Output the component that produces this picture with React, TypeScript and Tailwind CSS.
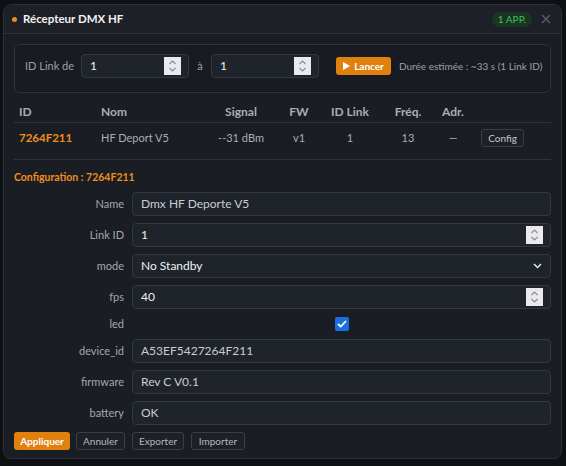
import React from "react";

function Spinner() {
  return (
    <span className="absolute right-[7px] top-1/2 -translate-y-1/2 w-[17px] h-[18px] bg-[#e9e9ee] flex flex-col items-center justify-center">
      <svg width="9" height="14" viewBox="0 0 9 14" fill="none" stroke="#8a8a90" strokeWidth="1.1">
        <path d="M1.5 5 L4.5 2 L7.5 5" />
        <path d="M1.5 9 L4.5 12 L7.5 9" />
      </svg>
    </span>
  );
}

function NumInput({ value, className }: { value: string; className: string }) {
  return (
    <div className={"relative h-[24px] rounded-[4px] border border-[#33373e] bg-[#1f232a] flex items-center pl-[8px] text-[12px] text-[#eef0f3] shrink-0 " + className}>
      {value}
      <Spinner />
    </div>
  );
}

function Field({ label, children, h = "h-[24px]" }: { label: string; children: React.ReactNode; h?: string }) {
  return (
    <div className={"flex items-center gap-[8px] " + h}>
      <div className="w-[110px] text-right text-[11px] leading-[14px] text-[#a3a8b0] shrink-0">{label}</div>
      <div className="flex-1 h-full">{children}</div>
    </div>
  );
}

function TextBox({ value }: { value: string }) {
  return (
    <div className="h-full rounded-[4px] border border-[#33373e] bg-[#1f232a] flex items-center pl-[8px] text-[12px] text-[#c9cdd3]">
      {value}
    </div>
  );
}

export default function App() {
  return (
    <div className="w-[566px] h-[466px] bg-[#0e1014] pt-[4px] pl-[3px] font-['Lato',sans-serif] overflow-hidden leading-[14px]">
      <div className="w-[559px] h-[455px] rounded-[8px] border border-[#2b2f36] bg-[#1a1d23] flex flex-col overflow-hidden">
        {/* header */}
        <div className="h-[29px] shrink-0 flex items-center pl-[8px] pr-[10px] bg-[#1d2026] border-b border-[#2d3138]">
          <span className="w-[5px] h-[5px] rounded-full bg-[#ef8a1a] mr-[6px]" />
          <span className="text-[11.5px] font-bold text-[#f1f2f4]">Récepteur DMX HF</span>
          <span className="ml-auto rounded-full bg-[#1b3523] text-[#3fc05c] text-[10px] px-[6px] h-[15px] flex items-center">1 APP.</span>
          <svg className="ml-[9px]" width="10" height="10" viewBox="0 0 10 10" stroke="#5b6068" strokeWidth="1.3">
            <path d="M1 1 L9 9 M9 1 L1 9" />
          </svg>
        </div>

        <div className="flex flex-col px-[10px] pt-[10px]">
          {/* range box */}
          <div className="h-[49px] rounded-[6px] border border-[#2f333a] bg-[#181b21] flex items-center pl-[10px] pr-[10px] pb-[6px]">
            <span className="w-[56px] shrink-0 whitespace-nowrap text-[11px] text-[#9ba0a8]">ID Link de</span>
            <NumInput value="1" className="w-[108px]" />
            <span className="w-[22px] shrink-0 text-center text-[11px] text-[#9ba0a8]">à</span>
            <NumInput value="1" className="w-[108px]" />
            <button className="ml-[17px] shrink-0 h-[18px] w-[55px] rounded-[3px] bg-[#e0800f] text-white text-[10px] font-bold flex items-center justify-center gap-[4px]">
              <svg width="7" height="8" viewBox="0 0 7 8"><path d="M0 0 L7 4 L0 8 Z" fill="#fff" /></svg>
              Lancer
            </button>
            <span className="ml-[8px] text-[10px] text-[#9ba0a8] whitespace-nowrap">Durée estimée : ~33 s (1 Link ID)</span>
          </div>

          {/* table */}
          <div className="mt-[9px] flex items-center h-[21px] border-b border-[#2e3239] text-[12px] font-bold text-[#a9aeb6]">
            <div className="w-[82px] pl-[5px]">ID</div>
            <div className="w-[100px] pl-[5px]">Nom</div>
            <div className="w-[90px] text-center">Signal</div>
            <div className="w-[26px] text-center">FW</div>
            <div className="w-[76px] text-center">ID Link</div>
            <div className="w-[40px] text-center">Fréq.</div>
            <div className="w-[50px] text-center">Adr.</div>
            <div className="flex-1" />
          </div>
          <div className="flex items-center h-[29px] text-[11px] text-[#a9aeb5]">
            <div className="w-[82px] pl-[5px] text-[11.5px] font-bold text-[#ee8e1c]">7264F211</div>
            <div className="w-[100px] pl-[5px]">HF Deport V5</div>
            <div className="w-[90px] text-center">--31 dBm</div>
            <div className="w-[26px] text-center">v1</div>
            <div className="w-[76px] text-center">1</div>
            <div className="w-[40px] text-center">13</div>
            <div className="w-[50px] text-center">—</div>
            <div className="flex-1 pl-[3px]">
              <button className="h-[18px] w-[43px] rounded-[3px] border border-[#3a3e46] bg-[#1d2026] text-[10px] text-[#c4c8ce]">Config</button>
            </div>
          </div>
          <div className="mt-[7px] border-t border-[#2e3239]" />

          <div className="mt-[10px] h-[14px] text-[10.5px] font-bold text-[#ee8e1c]">Configuration : 7264F211</div>

          <div className="mt-[8px] flex flex-col gap-[7px]">
            <Field label="Name"><TextBox value="Dmx HF Deporte V5" /></Field>
            <Field label="Link ID">
              <NumInput value="1" className="w-full" />
            </Field>
            <Field label="mode">
              <div className="h-full rounded-[4px] border border-[#33373e] bg-[#1f232a] flex items-center pl-[8px] pr-[8px] text-[12px] text-[#eef0f3]">
                No Standby
                <svg className="ml-auto" width="9" height="6" viewBox="0 0 9 6" fill="none" stroke="#e6e8eb" strokeWidth="1.5">
                  <path d="M1 1 L4.5 4.5 L8 1" />
                </svg>
              </div>
            </Field>
            <Field label="fps">
              <NumInput value="40" className="w-full" />
            </Field>
            <Field label="led" h="h-[16px]">
              <div className="h-full flex items-center justify-center">
                <span className="w-[14px] h-[14px] rounded-[2px] bg-[#1a6fe0] flex items-center justify-center">
                  <svg width="10" height="8" viewBox="0 0 10 8" fill="none" stroke="#fff" strokeWidth="1.8">
                    <path d="M1 4 L3.8 6.6 L9 1" />
                  </svg>
                </span>
              </div>
            </Field>
            <Field label="device_id"><TextBox value="A53EF5427264F211" /></Field>
            <Field label="firmware"><TextBox value="Rev C V0.1" /></Field>
            <Field label="battery"><TextBox value="OK" /></Field>
          </div>

          <div className="mt-[7px] flex items-center">
            <button className="h-[18px] w-[56px] rounded-[3px] bg-[#e0800f] text-white text-[10px] font-bold">Appliquer</button>
            <button className="ml-[6px] h-[18px] w-[49px] rounded-[3px] border border-[#3a3e46] bg-[#1d2026] text-[10px] text-[#b3b8bf]">Annuler</button>
            <button className="ml-[7px] h-[18px] w-[52px] rounded-[3px] border border-[#3a3e46] bg-[#1d2026] text-[10px] text-[#b3b8bf]">Exporter</button>
            <button className="ml-[7px] h-[18px] w-[54px] rounded-[3px] border border-[#3a3e46] bg-[#1d2026] text-[10px] text-[#b3b8bf]">Importer</button>
          </div>
        </div>
      </div>
    </div>
  );
}
